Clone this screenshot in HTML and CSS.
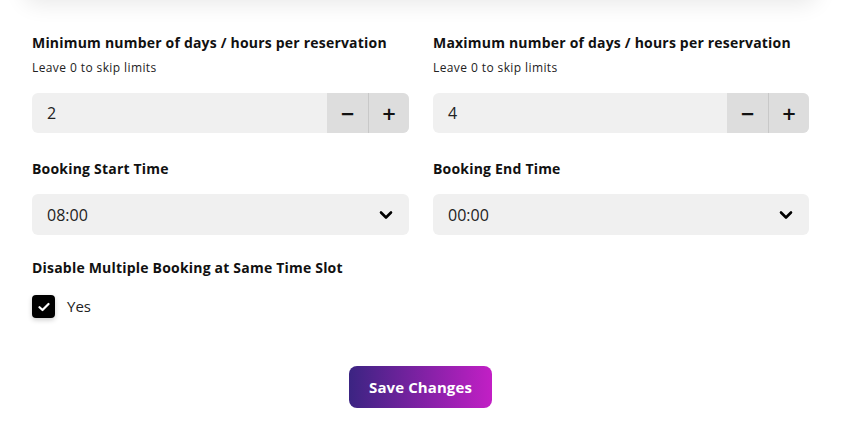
FILE: index.html
```html
<!DOCTYPE html>
<html lang="en">
<head>
<meta charset="utf-8">
<link rel="stylesheet" href="styles.css">
</head>
<body>
<div class="top-card"></div>
<form class="form">
  <div class="grid">
    <div class="field">
      <label class="label">Minimum number of days / hours per reservation</label>
      <div class="hint">Leave 0 to skip limits</div>
      <div class="stepper">
        <span class="value">2</span>
        <button type="button" class="step minus">&#8722;</button>
        <button type="button" class="step plus">+</button>
      </div>
    </div>
    <div class="field">
      <label class="label">Maximum number of days / hours per reservation</label>
      <div class="hint">Leave 0 to skip limits</div>
      <div class="stepper">
        <span class="value">4</span>
        <button type="button" class="step minus">&#8722;</button>
        <button type="button" class="step plus">+</button>
      </div>
    </div>
    <div class="field">
      <label class="label">Booking Start Time</label>
      <div class="select">
        <span class="value">08:00</span>
        <svg class="chev" width="14" height="10" viewBox="0 0 14 10"><path d="M2 2.5 L7 7.5 L12 2.5" fill="none" stroke="#000" stroke-width="2.6" stroke-linecap="round" stroke-linejoin="round"/></svg>
      </div>
    </div>
    <div class="field">
      <label class="label">Booking End Time</label>
      <div class="select">
        <span class="value">00:00</span>
        <svg class="chev" width="14" height="10" viewBox="0 0 14 10"><path d="M2 2.5 L7 7.5 L12 2.5" fill="none" stroke="#000" stroke-width="2.6" stroke-linecap="round" stroke-linejoin="round"/></svg>
      </div>
    </div>
  </div>
  <div class="field single">
    <label class="label">Disable Multiple Booking at Same Time Slot</label>
    <div class="check-row">
      <span class="checkbox">
        <svg width="12" height="10" viewBox="0 0 12 10"><path d="M1.5 5.2 L4.5 8 L10.5 2" fill="none" stroke="#fff" stroke-width="2.2" stroke-linecap="round" stroke-linejoin="round"/></svg>
      </span>
      <span class="check-label">Yes</span>
    </div>
  </div>
  <div class="actions">
    <button type="button" class="save">Save Changes</button>
  </div>
</form>
</body>
</html>
```

FILE: styles.css
```css
* { box-sizing: border-box; }
html, body { margin: 0; background: #fff; }
body {
  font-family: "Open Sans", "Noto Sans", sans-serif;
  color: #111;
  width: 841px;
  height: 439px;
  overflow: hidden;
}
.top-card {
  height: 40px;
  margin: -40px 24px 0;
  background: #fff;
  border-radius: 12px;
  box-shadow: 0 4px 22px rgba(0, 0, 0, 0.09);
}
.form {
  padding: 33px 32px 0;
}
.grid {
  display: grid;
  grid-template-columns: 377px 376px;
  column-gap: 24px;
  row-gap: 0;
}
.field {
  display: flex;
  flex-direction: column;
}
.label {
  font-size: 14px;
  font-weight: 700;
  line-height: 20px;
  letter-spacing: 0.2px;
  color: #111;
}
.hint {
  font-size: 12px;
  line-height: 18px;
  margin-top: 6px;
  letter-spacing: 0.4px;
  color: #222;
}
.stepper, .select {
  height: 40px;
  margin-top: 16px;
  background: #f0f0f0;
  border-radius: 6px;
  display: flex;
  align-items: center;
  overflow: hidden;
}
.select { margin-top: 15px; height: 41px; padding: 0 15px; }
.stepper { margin-bottom: 26px; }
.value {
  flex: 1;
  font-size: 16px;
  color: #222;
}
.stepper .value { padding-left: 15px; }
.step {
  width: 41px;
  height: 40px;
  border: 0;
  background: #dddddd;
  font-family: "DejaVu Sans", sans-serif;
  font-size: 18px;
  font-weight: 700;
  color: #111;
  padding: 0;
}
.step.plus { border-left: 1px solid #c8c8c8; width: 41px; }
.chev { display: block; margin-right: 1px; }
.single { margin-top: 23px; }
.check-row {
  display: flex;
  align-items: center;
  margin-top: 17px;
}
.checkbox {
  width: 23px;
  height: 23px;
  border-radius: 4px;
  background: #000;
  display: flex;
  align-items: center;
  justify-content: center;
  box-shadow: 0 2px 5px rgba(0, 0, 0, 0.2);
}
.check-label {
  margin-left: 12px;
  font-size: 15px;
  line-height: 20px;
  margin-top: -2px;
  color: #222;
}
.actions {
  display: flex;
  justify-content: center;
  margin-top: 48px;
}
.save {
  width: 143px;
  height: 42px;
  border: 0;
  border-radius: 8px;
  background: linear-gradient(90deg, #3b2482 0%, #c21fc5 100%);
  color: #fff;
  font-family: "Open Sans", sans-serif;
  font-size: 15px;
  font-weight: 700;
  letter-spacing: 0.1px;
  padding: 0;
}
```
